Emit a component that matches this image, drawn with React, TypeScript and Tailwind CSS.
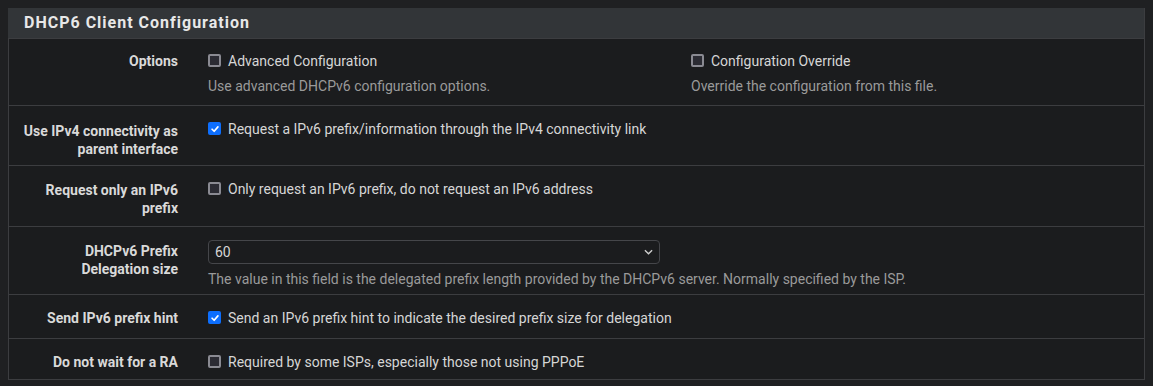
const Box = ({ checked }: { checked?: boolean }) =>
  checked ? (
    <span className="mt-[3px] flex h-[13px] w-[13px] shrink-0 items-center justify-center rounded-[2px] bg-[#0d6efd]">
      <svg viewBox="0 0 12 12" className="h-[10px] w-[10px]" fill="none" stroke="#fff" strokeWidth="2" strokeLinecap="round" strokeLinejoin="round">
        <path d="M2.5 6.3 5 8.7 9.5 3.5" />
      </svg>
    </span>
  ) : (
    <span className="mt-[3px] h-[13px] w-[13px] shrink-0 rounded-[2px] border-2 border-[#8a8a92] bg-[#2b2b33]" />
  );

const Check = ({ checked, text }: { checked?: boolean; text: string }) => (
  <div className="flex items-start gap-[7px] text-[14px] leading-[20px] text-[#d6d6d6]">
    <Box checked={checked} />
    <span>{text}</span>
  </div>
);

const Row = ({ label, children, h }: { label: React.ReactNode; children: React.ReactNode; h: string }) => (
  <div className={`flex border-t border-[#3c3d40] ${h}`}>
    <div className="w-[169px] shrink-0 text-right text-[14px] font-bold leading-[18px] text-[#d9d9d9]">{label}</div>
    <div className="ml-[30px] flex-1">{children}</div>
  </div>
);

export default function App() {
  return (
    <div className="min-h-[386px] bg-[#1f2022] p-2" style={{ fontFamily: "Roboto, 'Liberation Sans', sans-serif" }}>
      <div className="border-x border-b border-[#3c3d40] bg-[#1b1c1e]">
        <div className="-ml-px flex h-[30px] items-center bg-[#323538] pl-4 text-[16px] font-bold tracking-[1px] text-[#e8e8e8]">
          DHCP6 Client Configuration
        </div>
        <Row label={<div className="pt-[13px]">Options</div>} h="h-[67px]">
          <div className="flex pt-[12px]">
            <div className="w-[483px]">
              <Check text="Advanced Configuration" />
              <div className="mt-[5px] text-[14px] leading-[20px] text-[#9a9a9a]">Use advanced DHCPv6 configuration options.</div>
            </div>
            <div>
              <Check text="Configuration Override" />
              <div className="mt-[5px] text-[14px] leading-[20px] text-[#9a9a9a]">Override the configuration from this file.</div>
            </div>
          </div>
        </Row>
        <Row label={<div className="pt-[16px]">Use IPv4 connectivity as parent interface</div>} h="h-[60px]">
          <div className="pt-[13px]">
            <Check checked text="Request a IPv6 prefix/information through the IPv4 connectivity link" />
          </div>
        </Row>
        <Row label={<div className="pt-[15px] pl-[30px]">Request only an IPv6 prefix</div>} h="h-[61px]">
          <div className="pt-[13px]">
            <Check text="Only request an IPv6 prefix, do not request an IPv6 address" />
          </div>
        </Row>
        <Row label={<div className="pt-[15px] pl-[60px]">DHCPv6 Prefix Delegation size</div>} h="h-[68px]">
          <div className="pt-[13px]">
            <div className="flex h-[24px] w-[452px] items-center justify-between rounded-[4px] border border-[#45464a] bg-[#1b1c1e] pl-[6px] pr-[6px] text-[14px] text-[#d6d6d6]">
              <span>60</span>
              <svg viewBox="0 0 10 6" className="h-[6px] w-[9px]" fill="none" stroke="#cfcfcf" strokeWidth="1.5">
                <path d="M1 1l4 4 4-4" />
              </svg>
            </div>
            <div className="mt-[5px] text-[14px] leading-[20px] text-[#9a9a9a]">
              The value in this field is the delegated prefix length provided by the DHCPv6 server. Normally specified by the ISP.
            </div>
          </div>
        </Row>
        <Row label={<div className="pt-[14px]">Send IPv6 prefix hint</div>} h="h-[44px]">
          <div className="pt-[13px]">
            <Check checked text="Send an IPv6 prefix hint to indicate the desired prefix size for delegation" />
          </div>
        </Row>
        <Row label={<div className="pt-[14px]">Do not wait for a RA</div>} h="h-[41px]">
          <div className="pt-[13px]">
            <Check text="Required by some ISPs, especially those not using PPPoE" />
          </div>
        </Row>
      </div>
    </div>
  );
}
